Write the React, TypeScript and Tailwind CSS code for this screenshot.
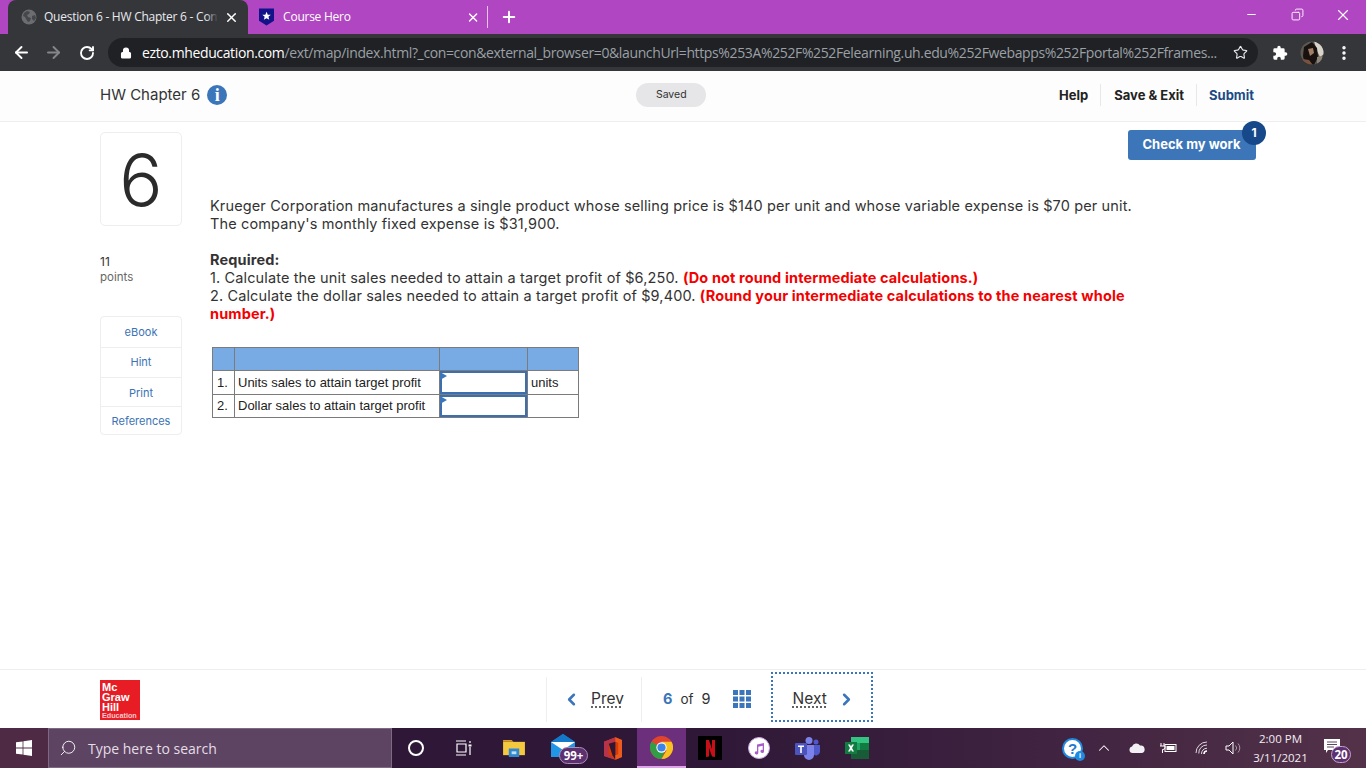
import React from "react";
import { ArrowLeft, ArrowRight, RotateCw, Lock, Star, EllipsisVertical, X, Plus, Minus, ChevronLeft, ChevronRight, Search, ChevronUp, Copy } from "lucide-react";

const sans = "font-['Inter',sans-serif]";

function Globe() {
  return (
    <svg width="16" height="16" viewBox="0 0 16 16">
      <circle cx="8" cy="8" r="7.5" fill="#6b6d71" />
      <path d="M3 4l3-2 3 1-1 2-2 1 1 2 3 1-1 3-2 1-2-3-1-2-2-1zM11 7l3-1 1 3-2 3-2-2z" fill="#45474b" />
    </svg>
  );
}

function Shield() {
  return (
    <svg width="16" height="18" viewBox="0 0 16 18">
      <path d="M0 0h16v13l-8 5-8-5z" fill="#12128a" />
      <path d="M8 3.5l1.3 3 3.2.2-2.5 2 .9 3.2L8 10.2l-2.9 1.7.9-3.2-2.5-2 3.2-.2z" fill="#fff" />
    </svg>
  );
}

function Avatar() {
  return (
    <svg width="24" height="24" viewBox="0 0 24 24">
      <defs>
        <clipPath id="av"><circle cx="12" cy="12" r="11.500" /></clipPath>
      </defs>
      <g clipPath="url(#av)">
        <rect width="24" height="24" fill="#5d5850" />
        <path d="M14 0l10 5v8l-4 3-3-6z" fill="#d8d4cb" />
        <path d="M4 6l8-5 5 6 1 9-4 8H5l-2-9z" fill="#17110f" />
        <path d="M8 8l5-1 1 5-4 3z" fill="#a07e68" />
        <path d="M3 18l6 1 4 5H3z" fill="#7a5340" />
        <path d="M17 16l5-1 1 6-6 3z" fill="#8d8579" />
      </g>
    </svg>
  );
}

function Puzzle() {
  return (
    <svg width="16" height="16" viewBox="0 0 24 24" fill="#fff">
      <path d="M20.5 11H19V7a2 2 0 0 0-2-2h-4V3.500a2.500 2.500 0 0 0-5 0V5H4a2 2 0 0 0-2 2v3.800h1.500a2.700 2.700 0 0 1 0 5.400H2V20a2 2 0 0 0 2 2h3.800v-1.500a2.700 2.700 0 0 1 5.400 0V22H17a2 2 0 0 0 2-2v-4h1.500a2.500 2.500 0 0 0 0-5z" />
    </svg>
  );
}

function Logo() {
  return (
    <div className="w-10 h-10 bg-[#e81c25] text-white font-['Liberation_Sans',sans-serif] font-bold pl-[2px] pt-[2px] overflow-hidden">
      <div className="text-[11px] leading-[10px]">Mc</div>
      <div className="text-[11px] leading-[10px]">Graw</div>
      <div className="text-[11px] leading-[10px]">Hill</div>
      <div className="text-[7.2px] leading-[8px] text-[#f9c9cb]">Education</div>
    </div>
  );
}

function Cell({ children, active }: { children?: React.ReactNode; active?: boolean }) {
  return (
    <div className={active ? "w-[48.7px] h-10 flex items-center justify-center bg-[#6b2f7b] border-b-2 border-[#dfa3ea] relative" : "w-[48.7px] h-10 flex items-center justify-center relative"}>
      {children}
    </div>
  );
}

function Taskbar() {
  return (
    <div className="h-10 flex items-stretch text-white bg-[linear-gradient(90deg,#2f1738_0%,#2e1737_50%,#3e2240_75%,#533249_100%)]">
      <div className="w-12 bg-[#4f2a45] flex items-center justify-center">
        <svg width="16" height="16" viewBox="0 0 16 16" fill="#fff">
          <path d="M0 2.300l6.600-.9v6.200H0zM7.400 1.300L16 0v7.600H7.400zM0 8.400h6.600v6.200L0 13.700zM7.400 8.400H16V16l-8.600-1.300z" />
        </svg>
      </div>
      <div className="w-[344px] bg-[#5e4463] border border-[#7d6a82] flex items-center pl-[10px] gap-[11px]">
        <Search size={18} strokeWidth={1.2} className="text-white -scale-x-100" />
        <span className="font-['Open_Sans',sans-serif] text-[14px] text-[#e4dde6]">Type here to search</span>
      </div>
      <Cell>
        <div className="w-[16px] h-[16px] rounded-full border-[2.5px] border-white" />
      </Cell>
      <Cell>
        <svg className="-ml-[4px]" width="17" height="16" viewBox="0 0 17 16" fill="none" stroke="#fff" strokeWidth="1.2">
          <path d="M1 1h10M1 15h10M2 4h9v8H2zM15 1v2M15 7v8" />
          <rect x="13.500" y="4.500" width="3" height="2" fill="#fff" stroke="none" />
        </svg>
      </Cell>
      <Cell>
        <svg width="22" height="19" viewBox="0 0 23 20">
          <path d="M0 1h9l2 2H0z" fill="#d9a21e" />
          <path d="M0 3h23v14H0z" fill="#f5c93f" />
          <path d="M6 10h11v9H6z" fill="#2f88d0" />
          <path d="M9 13h5v3H9z" fill="#bfe0f5" />
        </svg>
      </Cell>
      <div className="w-[2px]" />
      <Cell>
        <svg className="-mt-[6px] -ml-[2px]" width="24" height="23" viewBox="0 0 24 23">
          <path d="M0 8L12 0l12 8v15H0z" fill="#1f96e8" />
          <path d="M0 8h24L12 16z" fill="#fff" />
          <path d="M0 8L12 0l12 8z" fill="#1478c8" />
        </svg>
        <div className="absolute left-[19px] top-[19px] h-[17px] w-[29px] rounded-full bg-[#5d3070] border border-[#a98fb5] text-[11.5px] font-bold leading-[15px] text-center font-['Open_Sans',sans-serif]">99+</div>
      </Cell>
      <Cell>
        <svg width="18" height="23" viewBox="0 0 19 24">
          <path d="M0 5l12-5 7 3v18l-7 3-12-4z" fill="#d83b01" />
          <path d="M0 5l12-5v5L5 7v11l7 6-12-4z" fill="#b7334a" />
          <path d="M5 7l7-2v19l-3-5z" fill="#2f1738" />
          <path d="M12 0l7 3v18l-7 3v-5l3-1V6l-3-1z" fill="#ec5a1e" />
        </svg>
      </Cell>
      <Cell active>
        <svg width="23" height="23" viewBox="0 0 24 24">
          <circle cx="12" cy="12" r="12" fill="#e0442f" />
          <path d="M12 12L1.600 18A12 12 0 0 1 1.600 6z" fill="#2f9e44" />
          <path d="M1.600 18A12 12 0 0 0 12 24l5-12h-5z" fill="#2f9e44" />
          <path d="M12 6h10.400A12 12 0 0 1 12 24l5.200-9z" fill="#f7c21f" />
          <circle cx="12" cy="12" r="5.400" fill="#fff" />
          <circle cx="12" cy="12" r="4.300" fill="#3d84e6" />
        </svg>
      </Cell>
      <Cell>
        <div className="w-6 h-6 bg-black flex items-center justify-center">
          <svg width="9" height="17" viewBox="0 0 9 17">
            <path d="M0 0h3l3 9V0h3v17l-3-.4-3-8.600v8.600L0 17z" fill="#c70f18" />
          </svg>
        </div>
      </Cell>
      <Cell>
        <div className="w-[22px] h-[22px] rounded-full bg-white border border-[#c9a5e0] flex items-center justify-center">
          <svg width="12" height="13" viewBox="0 0 12 13">
            <path d="M4 2.500L11 1v8.500a1.800 1.600 0 1 1-1.300-1.600V3.700L5.300 4.700v6.300a1.800 1.600 0 1 1-1.300-1.600z" fill="#a75cc8" />
          </svg>
        </div>
      </Cell>
      <Cell>
        <svg width="25" height="23" viewBox="0 0 25 23">
          <circle cx="14" cy="3.500" r="3.500" fill="#7b83eb" />
          <circle cx="21" cy="5" r="2.500" fill="#5059c9" />
          <path d="M17 8h8v7a4 4 0 0 1-7 2z" fill="#5059c9" />
          <path d="M8 8h11v10a5 5 0 0 1-10 0z" fill="#7b83eb" />
          <rect x="0" y="6" width="12" height="12" rx="1" fill="#4b53bc" />
          <path d="M3 8.500h6v1.600H6.800V16H5.200v-5.900H3z" fill="#fff" />
        </svg>
      </Cell>
      <Cell>
        <svg width="24" height="22" viewBox="0 0 24 22">
          <path d="M6 0h18v6H6z" fill="#33c481" />
          <path d="M6 6h9v7H6z" fill="#21a366" />
          <path d="M15 6h9v7h-9z" fill="#107c41" />
          <path d="M6 13h18v9H6z" fill="#185c37" />
          <path d="M0 5h12v12H0z" fill="#107c41" />
          <path d="M3 7.500h2l1 2 1-2h2l-2 3.500 2 3.500H7l-1-2-1 2H3l2-3.500z" fill="#fff" />
        </svg>
      </Cell>
      <div className="flex-1" />
      <div className="flex items-center">
        <div className="w-[21px] h-[21px] rounded-full bg-white border-2 border-[#1f8ae0] text-[#1f78d0] text-[15px] font-bold leading-[17px] text-center font-['Liberation_Sans',sans-serif] relative">
          ?
          <div className="absolute -right-[4px] -bottom-[4px] w-[10px] h-[10px] rounded-full bg-[#1f8ae0] text-white text-[7px] leading-[10px]">i</div>
        </div>
        <ChevronUp size={18} strokeWidth={1.4} className="ml-[12px]" />
        <svg className="ml-[16px]" width="16" height="10" viewBox="0 0 16 10">
          <path d="M3.500 10a3.300 3.300 0 0 1-.5-6.500A4.500 4.500 0 0 1 11 2.500 3.800 3.800 0 0 1 12.500 10z" fill="#f2f0f3" />
        </svg>
        <svg className="ml-[14px]" width="18" height="12" viewBox="0 0 18 12" fill="none" stroke="#fff">
          <path d="M2 1v3M5 1v3M1 4h5v1.500a2 2 0 0 1-2 2H3.500V11" strokeWidth="1" />
          <rect x="6" y="2.500" width="11" height="7" strokeWidth="1" />
          <rect x="7.500" y="4" width="8" height="4" fill="#fff" stroke="none" />
        </svg>
        <svg className="ml-[18px]" width="15" height="14" viewBox="0 0 15 14" fill="none" stroke="#e0d8e0" strokeWidth="1">
          <path d="M1 12A11 11 0 0 1 12 1M3.800 12.500A8 8 0 0 1 12 4M6.500 13A5.500 5.500 0 0 1 12 7.200" />
          <path d="M9 13A3 3 0 0 1 12 10" stroke="#fff" strokeWidth="1.600" />
        </svg>
        <svg className="ml-[15px]" width="17" height="14" viewBox="0 0 17 14" fill="none" stroke="#fff" strokeWidth="1">
          <path d="M1 5h3l4-4v12L4 9H1z" />
          <path d="M10.500 4.500a3.500 3.500 0 0 1 0 5M13 2.500a6.500 6.500 0 0 1 0 9" stroke="#a798a6" />
        </svg>
      </div>
      <div className="w-[71px] ml-[3px] mr-[4px] flex flex-col items-center justify-center text-[11.5px] leading-[19px] text-[#f2edf2] font-['Open_Sans',sans-serif]">
        <div>2:00 PM</div>
        <div>3/11/2021</div>
      </div>
      <div className="w-[46px] relative flex items-center pl-[4px]">
        <svg width="17" height="15" viewBox="0 0 17 15" className="-mt-[4px]">
          <path d="M0 0h16v11H4l-2 3v-3H0z" fill="#fff" />
          <path d="M3 3h10M3 5.500h10M3 8h7" stroke="#5c4860" strokeWidth="1" />
        </svg>
        <div className="absolute left-[11px] top-[18px] w-[20px] h-[17px] rounded-full bg-[#5d3070] border border-[#c4a4d0] text-[11.5px] font-bold leading-[15px] text-center font-['Open_Sans',sans-serif]">20</div>
      </div>
    </div>
  );
}

function Chrome() {
  return (
    <div className="shrink-0">
      <div className="h-[34px] bg-[#b146c2] flex items-end pl-[8px] text-white">
        <div className="w-[240px] h-[34px] bg-[#35363a] rounded-t-[8px] flex items-center pl-[13px] gap-[7px]">
          <Globe />
          <div className="relative w-[174px] overflow-hidden whitespace-nowrap text-[12px] text-[#e8eaed] font-['Open_Sans',sans-serif] tracking-[-0.25px]">
            Question 6 - HW Chapter 6 - Con
            <div className="absolute right-0 top-0 bottom-0 w-[12px] bg-gradient-to-r from-transparent to-[#35363a]" />
          </div>
          <X size={15} strokeWidth={2.4} className="text-white -ml-[1px]" />
        </div>
        <div className="w-[232px] h-[34px] flex items-center pl-[11px] gap-[9px]">
          <Shield />
          <div className="w-[184px] text-[12px] font-['Open_Sans',sans-serif] tracking-[-0.25px] text-white whitespace-nowrap">Course Hero</div>
          <X size={15} strokeWidth={2.4} className="text-white" />
        </div>
        <div className="w-px h-[22px] bg-[#e6c4ec] mb-[6px] ml-[7px]" />
        <div className="h-[34px] flex items-center ml-[12px]">
          <Plus size={18} strokeWidth={2.6} />
        </div>
        <div className="flex-1" />
        <div className="h-[34px] flex items-start pt-[6px]">
          <div className="w-[46px] flex justify-center pt-[2px]"><Minus size={13} strokeWidth={1.8} /></div>
          <div className="w-[46px] flex justify-center pt-[2px]"><Copy size={13} strokeWidth={1.7} className="-scale-x-100" /></div>
          <div className="w-[46px] flex justify-center"><X size={18} strokeWidth={1.5} /></div>
        </div>
      </div>
      <div className="h-[37px] bg-[#35363a] flex items-center text-white">
        <div className="w-[108px] flex items-center pl-[12px] gap-[14px]">
          <ArrowLeft size={19} strokeWidth={2.4} />
          <ArrowRight size={19} strokeWidth={2.4} className="text-[#85868a] -ml-[1.5px]" />
          <RotateCw size={16} strokeWidth={2.8} className="ml-[2px]" />
        </div>
        <div className="w-[1150px] h-[29px] rounded-full bg-[#202124] flex items-center pl-[12px] pr-[10px]">
          <Lock size={12} fill="#fff" strokeWidth={2.2} />
          <div className="ml-[10px] w-[1076px] whitespace-nowrap overflow-hidden text-[14px] font-['Open_Sans',sans-serif] tracking-[-0.37px] text-[#9aa0a6]">
            <span className="text-white">ezto.mheducation.com</span>/ext/map/index.html?_con=con&amp;external_browser=0&amp;launchUrl=https%253A%252F%252Felearning.uh.edu%252Fwebapps%252Fportal%252Fframes...
          </div>
          <div className="flex-1" />
          <Star size={15} strokeWidth={1.8} className="text-[#e8eaed]" />
        </div>
        <div className="ml-[14px]"><Puzzle /></div>
        <div className="ml-[12px]"><Avatar /></div>
        <EllipsisVertical size={18} strokeWidth={2.6} className="ml-[11px]" />
      </div>
    </div>
  );
}

function Header() {
  return (
    <div className={`h-[51px] shrink-0 bg-[#fdfdfd] border-b border-[#eeeeee] flex items-center pb-[2px] pl-[100px] pr-[112px] ${sans}`}>
      <div className="text-[15px] text-[#333] whitespace-nowrap">HW Chapter 6</div>
      <div className="ml-[7px] w-[20px] h-[20px] rounded-full bg-[#3b75ba] text-white flex items-center justify-center font-['Liberation_Serif',serif] font-bold text-[18px]">i</div>
      <div className="w-[409px]" />
      <div className="w-[70px] h-[24px] rounded-full bg-[#e6e5e7] text-[10.5px] text-[#333] flex items-center justify-center">Saved</div>
      <div className="flex-1" />
      <div className="flex items-center text-[13px] font-bold text-[#222] whitespace-nowrap">
        <div className="pr-[12px] h-[22px] leading-[22px] border-r border-[#e8e8e8]">Help</div>
        <div className="pl-[13px] pr-[12px] h-[22px] leading-[22px] border-r border-[#e8e8e8]">Save &amp; Exit</div>
        <div className="pl-[12px] h-[22px] leading-[22px] text-[#1c4a86]">Submit</div>
      </div>
    </div>
  );
}

function Side() {
  const items = [
    { t: "eBook", c: "h-[30px]" },
    { t: "Hint", c: "h-[30px] border-t border-[#eeeeee]" },
    { t: "Print", c: "h-[29px] border-t border-[#eeeeee] pt-[3px]" },
    { t: "References", c: "h-[28px] border-t border-[#eeeeee] pt-[1px]" },
  ];
  return (
    <div className="w-[82px] shrink-0 pt-[10px]">
      <div className="h-[94px] rounded-[5px] border border-[#eeeeee] flex items-center justify-center text-[72px] leading-none text-[#2b2b2b] font-light pt-[1px]">6</div>
      <div className="mt-[27px] text-[12px] leading-[17px] text-[#333]">11</div>
      <div className="text-[11.5px] leading-[15px] text-[#666]">points</div>
      <div className="mt-[31px] h-[119px] rounded-[4px] border border-[#eeeeee] text-[#3b73b5] text-[11px] text-center">
        {items.map(({ t, c }) => (
          <div key={t} className={`${c} flex items-center justify-center`}>{t}</div>
        ))}
      </div>
    </div>
  );
}

function AnswerInput({ h }: { h: string }) {
  return (
    <td className="border border-[#7b7b7b] p-0">
      <div className={`${h} relative border-2 border-[#3b6fb0]`}>
        <div className="absolute -left-[2px] -top-[1px] w-0 h-0 border-y-[4px] border-y-transparent border-l-[7px] border-l-[#3b75ba]" />
      </div>
    </td>
  );
}

function AnswerTable() {
  const bd = "border border-[#7b7b7b]";
  return (
    <table className="ml-[2px] mt-[24px] w-[366px] h-[71px] border-collapse table-fixed font-['Liberation_Sans',sans-serif] text-[13px] tracking-normal text-[#222]">
      <colgroup>
        <col className="w-[22px]" />
        <col className="w-[205px]" />
        <col className="w-[88px]" />
        <col className="w-[51px]" />
      </colgroup>
      <tbody>
        <tr className="h-[23px] bg-[#78abe4]">
          <td className={bd} /><td className={bd} /><td className={bd} /><td className={bd} />
        </tr>
        <tr className="h-[24px]">
          <td className={`${bd} pl-[4px]`}>1.</td>
          <td className={`${bd} pl-[3px] whitespace-nowrap`}>Units sales to attain target profit</td>
          <AnswerInput h="h-[23px]" />
          <td className={`${bd} pl-[3px]`}>units</td>
        </tr>
        <tr className="h-[23px]">
          <td className={`${bd} pl-[4px]`}>2.</td>
          <td className={`${bd} pl-[3px] whitespace-nowrap`}>Dollar sales to attain target profit</td>
          <AnswerInput h="h-[22px]" />
          <td className={bd} />
        </tr>
      </tbody>
    </table>
  );
}

function Main() {
  return (
    <div className={`flex-1 flex pl-[100px] pr-[110px] bg-white ${sans}`}>
      <Side />
      <div className="ml-[28px] w-[925px] shrink-0 pt-[75px] text-[14.5px] leading-[18px] text-[#333] tracking-[0.13px]">
        <div>Krueger Corporation manufactures a single product whose selling price is $140 per unit and whose variable expense is $70 per unit.</div>
        <div>The company's monthly fixed expense is $31,900.</div>
        <div className="mt-[18px] font-bold">Required:</div>
        <div>1. Calculate the unit sales needed to attain a target profit of $6,250. <b className="text-[#f40000]">(Do not round intermediate calculations.)</b></div>
        <div>2. Calculate the dollar sales needed to attain a target profit of $9,400. <b className="text-[#f40000]">(Round your intermediate calculations to the nearest whole</b></div>
        <div className="font-bold text-[#f40000]">number.)</div>
        <AnswerTable />
      </div>
      <div className="w-[128px] shrink-0 -ml-[7px] h-[30px] mt-[8px] rounded-[3px] bg-[#3c75b8] text-white font-bold text-[13px] flex items-center justify-center relative">
        <span className="pr-[1px]">Check my work</span>
        <div className="absolute -right-[10px] -top-[9px] w-[24px] h-[24px] rounded-full bg-[#16488a] text-[12px] flex items-center justify-center">1</div>
      </div>
    </div>
  );
}

function Footer() {
  return (
    <div className={`h-[59px] shrink-0 bg-white border-t border-[#eeeeee] flex items-center pl-[100px] ${sans}`}>
      <div className="mt-[1px]"><Logo /></div>
      <div className="w-[406px]" />
      <div className="h-[45px] w-[96px] border-x border-[#eeeeee] flex items-center pl-[15px]">
        <ChevronLeft size={19} strokeWidth={3.2} className="text-[#3b75ba]" />
        <span className="ml-[10px] text-[15.5px] text-[#333] underline decoration-dotted underline-offset-[2px]">Prev</span>
      </div>
      <div className="ml-[21px] flex items-center text-[14.5px] text-[#333] whitespace-nowrap">
        <b className="text-[#3b75ba]">6</b>
        <span className="ml-[8px] text-[13.5px]">of</span>
        <span className="ml-[8px]">9</span>
        <svg className="ml-[22px]" width="18" height="18" viewBox="0 0 18 18" fill="#3b75ba">
          <path d="M0 0h5v5H0zM6.500 0h5v5h-5zM13 0h5v5h-5zM0 6.500h5v5H0zM6.500 6.500h5v5h-5zM13 6.500h5v5h-5zM0 13h5v5H0zM6.500 13h5v5h-5zM13 13h5v5h-5z" />
        </svg>
      </div>
      <div className="ml-[20px] mb-[4px] w-[102px] h-[50px] border-2 border-dotted border-[#3b75ba] flex items-center pl-[20px] pt-[4px]">
        <span className="text-[15.5px] text-[#333] underline decoration-dotted underline-offset-[2px]">Next</span>
        <ChevronRight size={19} strokeWidth={3.2} className="ml-[10px] text-[#3b75ba]" />
      </div>
    </div>
  );
}

export default function App() {
  return (
    <div className="w-[1366px] h-[768px] flex flex-col overflow-hidden bg-white">
      <Chrome />
      <Header />
      <Main />
      <Footer />
      <Taskbar />
    </div>
  );
}
